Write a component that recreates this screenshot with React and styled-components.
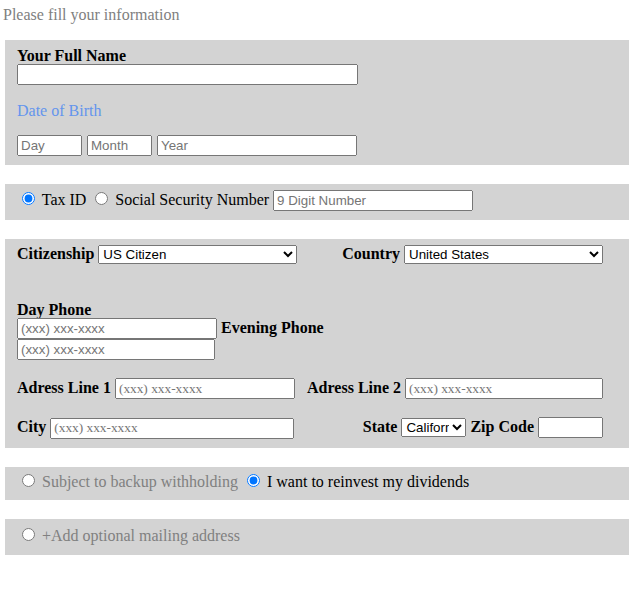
import React from "react";
import styled, { createGlobalStyle } from "styled-components";

const GlobalStyle = createGlobalStyle`
  body {
    margin: 0;
    background: #ffffff;
    font-family: "Liberation Serif", "Times New Roman", serif;
    font-size: 16px;
    color: #000000;
  }
  input, select {
    font-family: "Liberation Sans", Arial, sans-serif;
    font-size: 13.3333px;
  }
`;

const Page = styled.div`
  padding: 6px 9px 20px 0;
`;

const Title = styled.div`
  color: #808080;
  margin: 0 0 16px 3px;
  line-height: 18px;
`;

const Panel = styled.div`
  background: #d3d3d3;
  margin: 0 0 19px 5px;
  padding: ${(p) => p.$pad || "6px 12px"};
`;

const Label = styled.label`
  font-weight: bold;
  display: ${(p) => (p.$block ? "block" : "inline")};
  line-height: ${(p) => (p.$block ? "16px" : "18px")};
  padding-top: ${(p) => (p.$block ? "2px" : "0")};
`;

const Hint = styled.p`
  color: #6495ed;
  margin: 16px 0;
  padding-top: 2px;
  line-height: 16px;
`;

const TextInput = styled.input`
  width: ${(p) => p.$w}px;
  box-sizing: border-box;
  height: 21px;
  font-family: ${(p) =>
    p.$serif
      ? '"Liberation Serif", "Times New Roman", serif'
      : '"Liberation Sans", Arial, sans-serif'};
  display: ${(p) => (p.$block ? "block" : "inline-block")};
`;

const Select = styled.select`
  width: ${(p) => p.$w}px;
  height: 19px;
  box-sizing: border-box;
`;

const InputRow = styled.div`
  display: flex;
  gap: 5px;
`;

const Row = styled.div`
  display: flex;
  justify-content: space-between;
  align-items: baseline;
  padding-right: 14px;
  margin-top: ${(p) => p.$mt || 0}px;
`;

const Group = styled.div`
  display: flex;
  align-items: baseline;
  gap: 4px;
`;

const PhoneBlock = styled.div`
  margin-top: 36px;
`;

const PhoneLine = styled.div`
  display: flex;
  align-items: baseline;
  gap: 4px;
`;

const ChoiceRow = styled.div`
  line-height: 18px;
  white-space: nowrap;
`;

const Choice = styled.label`
  color: ${(p) => (p.$muted ? "#808080" : "#000000")};
`;

const Radio = styled.input.attrs({ type: "radio" })`
  margin: 3px 3px 0 5px;
`;

export default function App() {
  return (
    <>
      <GlobalStyle />
      <Page>
        <Title>Please fill your information</Title>

        <Panel $pad="6px 12px 9px">
          <Label $block htmlFor="fullname">Your Full Name</Label>
          <TextInput id="fullname" $w={341} $block />
          <Hint>Date of Birth</Hint>
          <InputRow>
            <TextInput $w={65} placeholder="Day" />
            <TextInput $w={65} placeholder="Month" />
            <TextInput $w={200} placeholder="Year" />
          </InputRow>
        </Panel>

        <Panel $pad="5px 12px 9px">
          <ChoiceRow>
            <Radio name="idtype" id="taxid" defaultChecked />{" "}
            <Choice htmlFor="taxid">Tax ID</Choice>{" "}
            <Radio name="idtype" id="ssn" />{" "}
            <Choice htmlFor="ssn">Social Security Number</Choice>{" "}
            <TextInput $w={200} placeholder="9 Digit Number" />
          </ChoiceRow>
        </Panel>

        <Panel $pad="6px 12px 9px">
          <Row>
            <Group>
              <Label>Citizenship</Label>
              <Select $w={199} defaultValue="us">
                <option value="us">US Citizen</option>
                <option value="other">Non-US Citizen</option>
              </Select>
            </Group>
            <Group>
              <Label>Country</Label>
              <Select $w={199} defaultValue="us">
                <option value="us">United States</option>
                <option value="ca">Canada</option>
              </Select>
            </Group>
          </Row>

          <PhoneBlock>
            <Label $block>Day Phone</Label>
            <PhoneLine>
              <TextInput $w={200} placeholder="(xxx) xxx-xxxx" />
              <Label>Evening Phone</Label>
            </PhoneLine>
            <TextInput $w={198} $block placeholder="(xxx) xxx-xxxx" />
          </PhoneBlock>

          <Row $mt={18}>
            <Group>
              <Label>Adress Line 1</Label>
              <TextInput $w={180} $serif placeholder="(xxx) xxx-xxxx" />
            </Group>
            <Group>
              <Label>Adress Line 2</Label>
              <TextInput $w={198} $serif placeholder="(xxx) xxx-xxxx" />
            </Group>
          </Row>

          <Row $mt={18}>
            <Group>
              <Label>City</Label>
              <TextInput $w={244} $serif placeholder="(xxx) xxx-xxxx" />
            </Group>
            <Group>
              <Label>State</Label>
              <Select $w={65} defaultValue="ca">
                <option value="ca">California</option>
                <option value="ny">New York</option>
              </Select>
              <Label>Zip Code</Label>
              <TextInput $w={65} />
            </Group>
          </Row>
        </Panel>

        <Panel $pad="4px 12px 9px">
          <ChoiceRow>
            <Radio name="div" id="backup" />{" "}
            <Choice $muted htmlFor="backup">Subject to backup withholding</Choice>{" "}
            <Radio name="div" id="reinvest" defaultChecked />{" "}
            <Choice htmlFor="reinvest">I want to reinvest my dividends</Choice>
          </ChoiceRow>
        </Panel>

        <Panel $pad="6px 12px 10px">
          <ChoiceRow>
            <Radio name="mail" id="mail" />{" "}
            <Choice $muted htmlFor="mail">+Add optional mailing address</Choice>
          </ChoiceRow>
        </Panel>
      </Page>
    </>
  );
}
